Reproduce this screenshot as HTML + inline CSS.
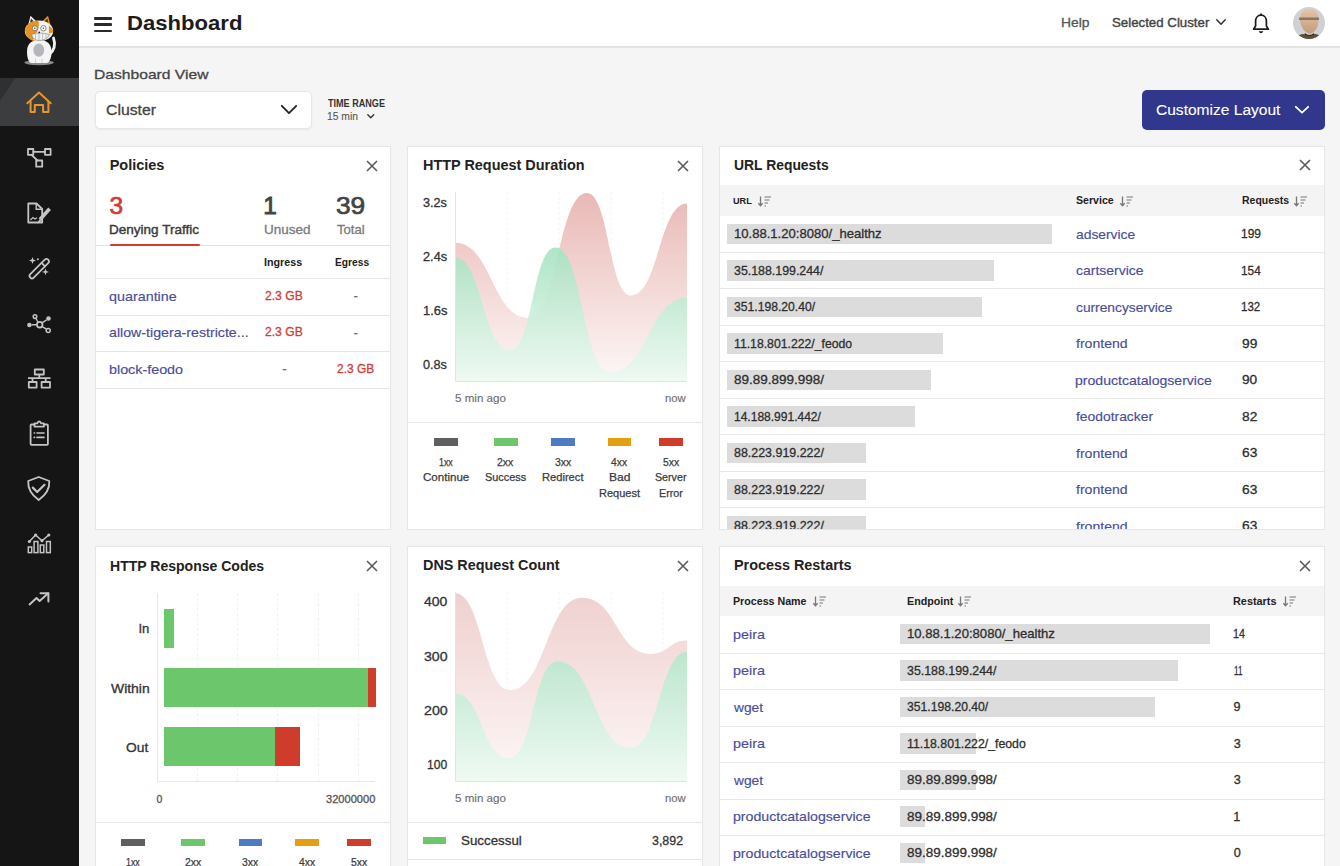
<!DOCTYPE html>
<html><head><meta charset="utf-8"><style>
html,body{margin:0;padding:0;width:1340px;height:866px;overflow:hidden;background:#f5f5f5;font-family:"Liberation Sans",sans-serif;}
.t{position:absolute;white-space:nowrap;transform-origin:0 0;}
svg{overflow:visible}
</style></head><body>
<div style="position:absolute;left:0.00px;top:0.00px;width:79.00px;height:866.00px;background:#151516;"></div>
<div style="position:absolute;left:0.00px;top:78.00px;width:79.00px;height:47.50px;background:#3c3d3f;"></div>
<svg style="position:absolute;left:0.00px;top:78.00px;" width="16" height="23" viewBox="0 0 16 23"><path d="M0 0H15.5Q8 11 0 23Z" fill="#2f3032"/></svg>
<svg style="position:absolute;left:0.00px;top:0.00px;" width="79" height="78" viewBox="0 0 79 78"><ellipse cx="39.1" cy="62.6" rx="14.7" ry="2.6" fill="#8a8a8a"/><path d="M49 55 Q57 48 53.5 38" stroke="#f2f2f2" stroke-width="2.8" fill="none" stroke-linecap="round"/><path d="M27 52 Q27 40 39 40 Q51.5 40 51.5 52 Q51.5 61 47 63 H31 Q27 61 27 52 Z" fill="#f4f4f4"/><ellipse cx="38.8" cy="50.1" rx="5.4" ry="6.6" fill="#b5b6ba"/><path d="M35.5 63 V58.5 M42 63 V58.5" stroke="#c8c8c8" stroke-width="0.8"/><path d="M28.2 25 L30.5 15.8 L37 22 Z" fill="#f2f2f2"/><path d="M30 23 L31 18.5 L34 21.5 Z" fill="#333"/><path d="M41.5 22 L48 15.7 L50.5 25 Z" fill="#e8921f"/><path d="M43.5 22 L47.5 18.5 L48.5 23 Z" fill="#5a3a10"/><ellipse cx="39" cy="31" rx="14.2" ry="10.4" fill="#f2f2f2"/><path d="M38.5 20.6 Q27 21 25 30 Q25.5 38 33 41 L35 34 Q40 30 38.5 20.6 Z" fill="#e8921f"/><path d="M48.8 25.5 Q53.5 28 53 32.5 L49 33.6 Z" fill="#e8921f"/><circle cx="34.8" cy="28.3" r="2.5" fill="#fff" stroke="#666" stroke-width="0.8"/><circle cx="43.4" cy="28.3" r="2.7" fill="#fff" stroke="#666" stroke-width="0.8"/><circle cx="34.8" cy="28.3" r="0.8" fill="#444"/><circle cx="43.4" cy="28.3" r="0.8" fill="#444"/><path d="M31.5 34.5 Q39 31.5 49.5 34.5 Q47 40.5 39 40.5 Q33 40.5 31.5 34.5 Z" fill="#f0f0f0" stroke="#777" stroke-width="0.6"/><path d="M35.5 34 V39.5 M39 33.3 V40 M42.5 33.6 V39.8 M46 34.2 V38.6" stroke="#999" stroke-width="0.5"/><circle cx="39.2" cy="32.3" r="0.9" fill="#222"/></svg>
<svg style="position:absolute;left:0.00px;top:78.00px;" width="79" height="48" viewBox="0 0 79 48"><path d="M27.3 25.3 L39 14.6 L50.7 25.3" stroke="#e8962a" stroke-width="2" fill="none" stroke-linejoin="round" stroke-linecap="round"/><path d="M30.6 23 V34 H34.8 V27 H43.1 V34 H48.4 V23" stroke="#e8962a" stroke-width="2" fill="none" stroke-linejoin="round"/></svg>
<svg style="position:absolute;left:0.00px;top:140.00px;" width="79" height="32" viewBox="0 0 79 32"><rect x="28" y="9" width="5.3" height="5.8" stroke="#c4c4c4" stroke-width="1.8" fill="none" stroke-linejoin="round" stroke-linecap="round"/><rect x="45" y="9" width="5.6" height="5.8" stroke="#c4c4c4" stroke-width="1.8" fill="none" stroke-linejoin="round" stroke-linecap="round"/><rect x="36.2" y="20.5" width="6" height="6.2" stroke="#c4c4c4" stroke-width="1.8" fill="none" stroke-linejoin="round" stroke-linecap="round"/><path d="M33.3 11.9 H45 M31.5 14.8 L37.5 20.5" stroke="#c4c4c4" stroke-width="1.8" fill="none" stroke-linejoin="round" stroke-linecap="round"/></svg>
<svg style="position:absolute;left:0.00px;top:195.00px;" width="79" height="32" viewBox="0 0 79 32"><path d="M28.3 8.5 H36.5 L42.2 14 V27.5 H28.3 Z" stroke="#c4c4c4" stroke-width="1.8" fill="none" stroke-linejoin="round" stroke-linecap="round"/><path d="M36.2 8.8 V14.2 H41.8" stroke="#c4c4c4" stroke-width="1.4" fill="none"/><path d="M30.5 25 L33 22.5 L35 24 L37 22.8" stroke="#c4c4c4" stroke-width="1.2" fill="none"/><path d="M49.6 13.8 L40 24.5" stroke="#c4c4c4" stroke-width="3.6" fill="none"/><path d="M40 24.5 L38.5 27 L41 25.6" stroke="#c4c4c4" stroke-width="1.2" fill="#c4c4c4"/></svg>
<svg style="position:absolute;left:0.00px;top:250.00px;" width="79" height="32" viewBox="0 0 79 32"><path d="M30.3 24.2 L44.8 9.7 Q46.5 8 48.2 9.7 Q49.9 11.4 48.2 13.1 L33.7 27.6 Q32 29.3 30.3 27.6 Q28.6 25.9 30.3 24.2 Z" stroke="#c4c4c4" stroke-width="1.8" fill="none" stroke-linejoin="round" stroke-linecap="round"/><path d="M41.6 12.9 L45 16.3" stroke="#c4c4c4" stroke-width="1.8" fill="none" stroke-linejoin="round" stroke-linecap="round"/><path d="M32.5 7 L33.4 9.6 L36 10.5 L33.4 11.4 L32.5 14 L31.6 11.4 L29 10.5 L31.6 9.6 Z" fill="#c4c4c4"/><path d="M45.5 18.5 L46.4 21 L48.9 21.9 L46.4 22.8 L45.5 25.3 L44.6 22.8 L42.1 21.9 L44.6 21 Z" fill="#c4c4c4"/><circle cx="37.9" cy="9.2" r="1" fill="#c4c4c4"/></svg>
<svg style="position:absolute;left:0.00px;top:305.00px;" width="79" height="32" viewBox="0 0 79 32"><circle cx="39.7" cy="19.7" r="2.8" stroke="#c4c4c4" stroke-width="1.8" fill="none" stroke-linejoin="round" stroke-linecap="round"/><circle cx="35" cy="11.6" r="1.8" stroke="#c4c4c4" stroke-width="1.5" fill="none"/><circle cx="48.5" cy="13.5" r="2.3" fill="#c4c4c4"/><circle cx="29.4" cy="20" r="2.3" fill="#c4c4c4"/><circle cx="48.2" cy="25.5" r="2" stroke="#c4c4c4" stroke-width="1.5" fill="none"/><path d="M36.9 19.8 H31.7 M38 17.3 L35.9 13.2 M42 17.9 L46.6 14.8 M42 21.6 L46.6 24.2" stroke="#c4c4c4" stroke-width="1.4"/></svg>
<svg style="position:absolute;left:0.00px;top:360.00px;" width="79" height="32" viewBox="0 0 79 32"><rect x="34.8" y="9.5" width="9" height="5" stroke="#c4c4c4" stroke-width="1.8" fill="none" stroke-linejoin="round" stroke-linecap="round"/><path d="M39.3 14.5 V18.2 M28 18.2 H50.5 M32.5 18.2 V21.8 M45.7 18.2 V21.8" stroke="#c4c4c4" stroke-width="1.8"/><rect x="28.8" y="22" width="7.8" height="5.6" stroke="#c4c4c4" stroke-width="1.8" fill="none" stroke-linejoin="round" stroke-linecap="round"/><rect x="41.6" y="22" width="8.4" height="5.6" stroke="#c4c4c4" stroke-width="1.8" fill="none" stroke-linejoin="round" stroke-linecap="round"/></svg>
<svg style="position:absolute;left:0.00px;top:415.00px;" width="79" height="32" viewBox="0 0 79 32"><path d="M34.4 9.5 H31.5 Q30.6 9.5 30.6 10.4 V29 Q30.6 29.9 31.5 29.9 H47 Q47.9 29.9 47.9 29 V10.4 Q47.9 9.5 47 9.5 H44" stroke="#c4c4c4" stroke-width="1.8" fill="none" stroke-linejoin="round" stroke-linecap="round"/><path d="M34.5 8.3 H37.4 Q37.8 6.5 39.2 6.5 Q40.6 6.5 41 8.3 H43.9 V11.6 H34.5 Z" stroke="#c4c4c4" stroke-width="1.8" fill="none" stroke-linejoin="round" stroke-linecap="round"/><path d="M34.2 18 H34.6 M37 18 H44 M34.2 22.4 H34.6 M37 22.4 H44" stroke="#c4c4c4" stroke-width="1.6" stroke-linecap="round"/></svg>
<svg style="position:absolute;left:0.00px;top:470.00px;" width="79" height="32" viewBox="0 0 79 32"><path d="M38.7 7 L49.3 11 Q50 22 38.7 30 Q27.5 22 28.2 11 Z" stroke="#c4c4c4" stroke-width="1.8" fill="none" stroke-linejoin="round" stroke-linecap="round"/><path d="M32.8 17.6 L37.2 22 L44.5 14.8" stroke="#c4c4c4" stroke-width="2.2" fill="none" stroke-linecap="round" stroke-linejoin="round"/></svg>
<svg style="position:absolute;left:0.00px;top:525.00px;" width="79" height="32" viewBox="0 0 79 32"><path d="M29.4 16.5 L35.6 10 L42 15.7 L48.8 10" stroke="#c4c4c4" stroke-width="1.5" fill="none"/><circle cx="29.4" cy="16.5" r="1.6" fill="#c4c4c4"/><circle cx="35.6" cy="10" r="1.6" fill="#c4c4c4"/><circle cx="42" cy="15.7" r="1.6" fill="#c4c4c4"/><circle cx="48.8" cy="10" r="1.6" fill="#c4c4c4"/><rect x="28.3" y="22" width="3.4" height="5.6" stroke="#c4c4c4" stroke-width="1.5" fill="none"/><rect x="34.1" y="16.5" width="3.8" height="11.1" stroke="#c4c4c4" stroke-width="1.5" fill="none"/><rect x="40.3" y="20" width="3.5" height="7.6" stroke="#c4c4c4" stroke-width="1.5" fill="none"/><rect x="46.5" y="16.5" width="3.8" height="11.1" stroke="#c4c4c4" stroke-width="1.5" fill="none"/></svg>
<svg style="position:absolute;left:0.00px;top:580.00px;" width="79" height="32" viewBox="0 0 79 32"><path d="M29.6 24.4 L36.5 18 L39.6 21 L48.2 13.2" stroke="#c4c4c4" stroke-width="2" fill="none" stroke-linejoin="round" stroke-linecap="round"/><path d="M40.5 13.2 H48.4 V21.5" stroke="#c4c4c4" stroke-width="2" fill="none" stroke-linejoin="round" stroke-linecap="round"/></svg>
<div style="position:absolute;left:79.00px;top:0.00px;width:1261.00px;height:46.00px;background:#fff;"></div>
<div style="position:absolute;left:79.00px;top:46.00px;width:1261.00px;height:2.00px;background:#e2e2e2;"></div>
<div style="position:absolute;left:94.00px;top:17.00px;width:18.00px;height:2.50px;background:#2a2a2a;border-radius:1px;"></div>
<div style="position:absolute;left:94.00px;top:23.30px;width:18.00px;height:2.50px;background:#2a2a2a;border-radius:1px;"></div>
<div style="position:absolute;left:94.00px;top:29.50px;width:18.00px;height:2.50px;background:#2a2a2a;border-radius:1px;"></div>
<div class="t" style="left:126.52px;top:12.65px;font-size:20.50px;line-height:20.50px;font-weight:700;color:#1c1c1c;transform:scaleX(1.0781);">Dashboard</div>
<div class="t" style="left:1060.86px;top:15.97px;font-size:13.50px;line-height:13.50px;color:#555;-webkit-text-stroke:0.30px #555;transform:scaleX(1.0272);">Help</div>
<div class="t" style="left:1112.40px;top:15.97px;font-size:13.50px;line-height:13.50px;color:#444;-webkit-text-stroke:0.40px #444;transform:scaleX(0.9826);">Selected Cluster</div>
<svg style="position:absolute;left:1215.50px;top:19.00px;" width="10" height="6" viewBox="0 0 10 6"><path d="M0.8 0.8L5.00 5.20L9.20 0.8" stroke="#333" stroke-width="1.5" fill="none" stroke-linecap="round" stroke-linejoin="round"/></svg>
<svg style="position:absolute;left:1251.00px;top:13.00px;" width="20" height="21" viewBox="0 0 20 21"><path d="M10 2.2C6.6 2.2 4.6 4.9 4.6 8.2V13L2.6 16.2H17.4L15.4 13V8.2C15.4 4.9 13.4 2.2 10 2.2Z" stroke="#1a1a1a" stroke-width="1.7" fill="none" stroke-linejoin="round"/><path d="M7.6 18.3Q10 22 12.4 18.3Z" fill="#1a1a1a"/><path d="M10 0.6V2.2" stroke="#1a1a1a" stroke-width="1.7"/></svg>
<svg style="position:absolute;left:1293.00px;top:7.00px;" width="32" height="32" viewBox="0 0 32 32"><defs><clipPath id="av"><circle cx="16" cy="16" r="16"/></clipPath><linearGradient id="avf" x1="0" y1="0" x2="0" y2="1"><stop offset="0" stop-color="#e4c4a8"/><stop offset="1" stop-color="#c49a7c"/></linearGradient></defs><g clip-path="url(#av)"><rect width="32" height="32" fill="#cfd1d4"/><path d="M7 14 Q7 2 16.5 2 Q26 2 25.5 14 Q25 24 17 27 Q9 25 7 14Z" fill="url(#avf)"/><path d="M6 10.5 H26 V13 H6Z" fill="#6a5a48" opacity="0.7"/><path d="M12 26 Q16 30 21 26 L22 29 Q16 33 11 29Z" fill="#3a2e20"/><path d="M2 34 Q4 27 11 27 Q16 31 22 27 Q29 28 30 34Z" fill="#5a5038"/></g></svg>
<div class="t" style="left:93.52px;top:68.07px;font-size:13.50px;line-height:13.50px;color:#454545;-webkit-text-stroke:0.30px #454545;transform:scaleX(1.1584);">Dashboard View</div>
<div style="position:absolute;left:95.00px;top:91.00px;width:216.50px;height:38.00px;background:#fff;border:1px solid #e6e6e6;border-radius:5px;box-sizing:border-box;box-shadow:0 1px 2px rgba(0,0,0,0.06);"></div>
<div class="t" style="left:105.70px;top:103.16px;font-size:14.70px;line-height:14.70px;color:#444;-webkit-text-stroke:0.30px #444;transform:scaleX(1.0752);">Cluster</div>
<svg style="position:absolute;left:281.00px;top:105.00px;" width="16" height="9" viewBox="0 0 16 9"><path d="M0.8 0.8L8.00 8.20L15.20 0.8" stroke="#222" stroke-width="1.8" fill="none" stroke-linecap="round" stroke-linejoin="round"/></svg>
<div class="t" style="left:328.10px;top:98.73px;font-size:10.00px;line-height:10.00px;font-weight:700;color:#333;transform:scaleX(0.9073);">TIME RANGE</div>
<div class="t" style="left:327.41px;top:110.69px;font-size:11.00px;line-height:11.00px;color:#555;-webkit-text-stroke:0.10px #555;transform:scaleX(0.9376);">15 min</div>
<svg style="position:absolute;left:367.00px;top:114.00px;" width="7.5" height="4.5" viewBox="0 0 7.5 4.5"><path d="M0.8 0.8L3.75 3.70L6.70 0.8" stroke="#333" stroke-width="1.4" fill="none" stroke-linecap="round" stroke-linejoin="round"/></svg>
<div style="position:absolute;left:1141.50px;top:90.00px;width:183.50px;height:39.50px;background:#30378d;border-radius:5px;"></div>
<div class="t" style="left:1156.21px;top:102.38px;font-size:15.50px;line-height:15.50px;color:#fff;-webkit-text-stroke:0.10px #fff;transform:scaleX(1.0028);">Customize Layout</div>
<svg style="position:absolute;left:1294.50px;top:106.00px;" width="14" height="7.5" viewBox="0 0 14 7.5"><path d="M0.8 0.8L7.00 6.70L13.20 0.8" stroke="#fff" stroke-width="1.8" fill="none" stroke-linecap="round" stroke-linejoin="round"/></svg>
<div style="position:absolute;left:95.00px;top:146.00px;width:296.00px;height:384.00px;background:#fff;border:1px solid #e6e6e6;box-sizing:border-box;"></div>
<div style="position:absolute;left:407.00px;top:146.00px;width:296.00px;height:384.00px;background:#fff;border:1px solid #e6e6e6;box-sizing:border-box;"></div>
<div style="position:absolute;left:719.00px;top:146.00px;width:606.00px;height:384.00px;background:#fff;border:1px solid #e6e6e6;box-sizing:border-box;"></div>
<div style="position:absolute;left:95.00px;top:546.00px;width:296.00px;height:354.00px;background:#fff;border:1px solid #e6e6e6;box-sizing:border-box;"></div>
<div style="position:absolute;left:407.00px;top:546.00px;width:296.00px;height:354.00px;background:#fff;border:1px solid #e6e6e6;box-sizing:border-box;"></div>
<div style="position:absolute;left:719.00px;top:546.00px;width:606.00px;height:354.00px;background:#fff;border:1px solid #e6e6e6;box-sizing:border-box;"></div>
<div class="t" style="left:109.63px;top:158.23px;font-size:14.50px;line-height:14.50px;font-weight:700;color:#222;">Policies</div>
<svg style="position:absolute;left:365.50px;top:159.50px;" width="12" height="12" viewBox="0 0 12 12"><path d="M1 1L11 11M11 1L1 11" stroke="#5a5a5a" stroke-width="1.6" fill="none"/></svg>
<div class="t" style="left:109.47px;top:193.56px;font-size:24.50px;line-height:24.50px;color:#d23b35;-webkit-text-stroke:0.70px #d23b35;">3</div>
<div class="t" style="left:108.89px;top:223.20px;font-size:13.00px;line-height:13.00px;color:#3a3a3a;-webkit-text-stroke:0.40px #3a3a3a;transform:scaleX(1.0406);">Denying Traffic</div>
<div class="t" style="left:263.13px;top:193.56px;font-size:24.50px;line-height:24.50px;color:#444;-webkit-text-stroke:0.90px #444;">1</div>
<div class="t" style="left:263.96px;top:223.20px;font-size:13.00px;line-height:13.00px;color:#7a7a7a;-webkit-text-stroke:0.30px #7a7a7a;transform:scaleX(1.0357);">Unused</div>
<div class="t" style="left:336.00px;top:193.56px;font-size:24.50px;line-height:24.50px;color:#444;-webkit-text-stroke:0.70px #444;transform:scaleX(1.0732);">39</div>
<div class="t" style="left:336.71px;top:223.20px;font-size:13.00px;line-height:13.00px;color:#7a7a7a;-webkit-text-stroke:0.30px #7a7a7a;transform:scaleX(1.0094);">Total</div>
<div style="position:absolute;left:96.00px;top:245.00px;width:294.00px;height:1.00px;background:#e3e3e3;"></div>
<div style="position:absolute;left:110.00px;top:243.70px;width:90.00px;height:2.30px;background:#d23b35;border-radius:1px;"></div>
<div class="t" style="left:264.28px;top:257.11px;font-size:10.50px;line-height:10.50px;font-weight:700;color:#222;transform:scaleX(1.0216);">Ingress</div>
<div class="t" style="left:335.32px;top:257.11px;font-size:10.50px;line-height:10.50px;font-weight:700;color:#222;transform:scaleX(0.9738);">Egress</div>
<div style="position:absolute;left:96.00px;top:278.00px;width:294.00px;height:1.00px;background:#e6e6e6;"></div>
<div style="position:absolute;left:96.00px;top:314.50px;width:294.00px;height:1.00px;background:#e6e6e6;"></div>
<div style="position:absolute;left:96.00px;top:351.00px;width:294.00px;height:1.00px;background:#e6e6e6;"></div>
<div style="position:absolute;left:96.00px;top:387.50px;width:294.00px;height:1.00px;background:#e6e6e6;"></div>
<div class="t" style="left:109.40px;top:289.50px;font-size:13.00px;line-height:13.00px;color:#4a4d9c;-webkit-text-stroke:0.15px #4a4d9c;transform:scaleX(1.1025);">quarantine</div>
<div class="t" style="left:265.39px;top:289.92px;font-size:12.50px;line-height:12.50px;color:#d23b35;-webkit-text-stroke:0.30px #d23b35;transform:scaleX(0.9702);">2.3 GB</div>
<div class="t" style="left:353.80px;top:290.34px;font-size:12.00px;line-height:12.00px;color:#666;-webkit-text-stroke:0.30px #666;">-</div>
<div class="t" style="left:109.40px;top:326.00px;font-size:13.00px;line-height:13.00px;color:#4a4d9c;-webkit-text-stroke:0.15px #4a4d9c;transform:scaleX(1.0917);">allow-tigera-restricte...</div>
<div class="t" style="left:265.39px;top:326.42px;font-size:12.50px;line-height:12.50px;color:#d23b35;-webkit-text-stroke:0.30px #d23b35;transform:scaleX(0.9702);">2.3 GB</div>
<div class="t" style="left:353.80px;top:326.84px;font-size:12.00px;line-height:12.00px;color:#666;-webkit-text-stroke:0.30px #666;">-</div>
<div class="t" style="left:109.08px;top:362.50px;font-size:13.00px;line-height:13.00px;color:#4a4d9c;-webkit-text-stroke:0.15px #4a4d9c;transform:scaleX(1.1014);">block-feodo</div>
<div class="t" style="left:282.60px;top:363.34px;font-size:12.00px;line-height:12.00px;color:#666;-webkit-text-stroke:0.30px #666;">-</div>
<div class="t" style="left:337.10px;top:362.92px;font-size:12.50px;line-height:12.50px;color:#d23b35;-webkit-text-stroke:0.30px #d23b35;transform:scaleX(0.9569);">2.3 GB</div>
<div class="t" style="left:422.54px;top:158.23px;font-size:14.50px;line-height:14.50px;font-weight:700;color:#222;transform:scaleX(0.9947);">HTTP Request Duration</div>
<svg style="position:absolute;left:677.00px;top:159.50px;" width="12" height="12" viewBox="0 0 12 12"><path d="M1 1L11 11M11 1L1 11" stroke="#5a5a5a" stroke-width="1.6" fill="none"/></svg>
<div class="t" style="left:423.02px;top:196.84px;font-size:12.00px;line-height:12.00px;color:#333;-webkit-text-stroke:0.30px #333;transform:scaleX(1.0555);">3.2s</div>
<div class="t" style="left:422.86px;top:250.84px;font-size:12.00px;line-height:12.00px;color:#333;-webkit-text-stroke:0.30px #333;transform:scaleX(1.0626);">2.4s</div>
<div class="t" style="left:422.51px;top:304.94px;font-size:12.00px;line-height:12.00px;color:#333;-webkit-text-stroke:0.30px #333;transform:scaleX(1.0781);">1.6s</div>
<div class="t" style="left:423.00px;top:358.94px;font-size:12.00px;line-height:12.00px;color:#333;-webkit-text-stroke:0.30px #333;transform:scaleX(1.0560);">0.8s</div>
<svg style="position:absolute;left:455.00px;top:192.00px;" width="232" height="190" viewBox="0 0 232 190"><defs><linearGradient id="gr192" x1="0" y1="0" x2="0" y2="1"><stop offset="0" stop-color="#e9b9b6"/><stop offset="1" stop-color="#fdf8f7"/></linearGradient><linearGradient id="gg192" x1="0" y1="0" x2="0" y2="1"><stop offset="0" stop-color="#a6e2c1" stop-opacity="0.9"/><stop offset="1" stop-color="#eefaf3" stop-opacity="0.9"/></linearGradient></defs><path d="M52.0 0V190.0" stroke="#f3f3f3" stroke-width="1" stroke-dasharray="3 2"/><path d="M104.0 0V190.0" stroke="#f3f3f3" stroke-width="1" stroke-dasharray="3 2"/><path d="M156.0 0V190.0" stroke="#f3f3f3" stroke-width="1" stroke-dasharray="3 2"/><path d="M208.0 0V190.0" stroke="#f3f3f3" stroke-width="1" stroke-dasharray="3 2"/><path d="M0.0 50.8 C36.8 50.8 36.8 126.0 73.6 126.0 C102.8 126.0 102.8 1.1 132.0 1.1 C153.9 1.1 153.9 103.4 175.8 103.4 C203.9 103.4 203.9 11.5 232.0 11.5 L232.0 190.0 L0.0 190.0 Z" fill="url(#gr192)"/><path d="M0.0 65.8 C27.5 65.8 27.5 158.2 55.0 158.2 C77.7 158.2 77.7 55.4 100.4 55.4 C127.7 55.4 127.7 180.2 155.0 180.2 C193.5 180.2 193.5 105.8 232.0 105.8 L232.0 190.0 L0.0 190.0 Z" fill="url(#gg192)"/><path d="M0.5 0V189.5H232.0" stroke="#e4e4e4" stroke-width="1" fill="none"/></svg>
<div class="t" style="left:455.04px;top:392.69px;font-size:11.00px;line-height:11.00px;color:#707070;-webkit-text-stroke:0.15px #707070;transform:scaleX(1.0547);">5 min ago</div>
<div class="t" style="left:665.25px;top:392.69px;font-size:11.00px;line-height:11.00px;color:#707070;-webkit-text-stroke:0.15px #707070;transform:scaleX(1.0269);">now</div>
<div style="position:absolute;left:408.00px;top:421.50px;width:294.00px;height:1.00px;background:#e6e6e6;"></div>
<div style="position:absolute;left:434.00px;top:438.30px;width:24.00px;height:7.70px;background:#5f5f5f;"></div>
<div class="t" style="left:438.83px;top:456.63px;font-size:11.30px;line-height:11.30px;color:#3a3a3a;-webkit-text-stroke:0.25px #3a3a3a;transform:scaleX(0.7830);">1xx</div>
<div class="t" style="left:422.81px;top:472.43px;font-size:11.30px;line-height:11.30px;color:#3a3a3a;-webkit-text-stroke:0.25px #3a3a3a;transform:scaleX(1.0236);">Continue</div>
<div style="position:absolute;left:493.75px;top:438.30px;width:23.85px;height:7.70px;background:#6cc66c;"></div>
<div class="t" style="left:497.30px;top:456.63px;font-size:11.30px;line-height:11.30px;color:#3a3a3a;-webkit-text-stroke:0.25px #3a3a3a;transform:scaleX(0.9293);">2xx</div>
<div class="t" style="left:485.03px;top:472.43px;font-size:11.30px;line-height:11.30px;color:#3a3a3a;-webkit-text-stroke:0.25px #3a3a3a;transform:scaleX(0.9645);">Success</div>
<div style="position:absolute;left:551.00px;top:438.30px;width:23.80px;height:7.70px;background:#4f7bc4;"></div>
<div class="t" style="left:554.65px;top:456.63px;font-size:11.30px;line-height:11.30px;color:#3a3a3a;-webkit-text-stroke:0.25px #3a3a3a;transform:scaleX(0.9218);">3xx</div>
<div class="t" style="left:541.74px;top:472.43px;font-size:11.30px;line-height:11.30px;color:#3a3a3a;-webkit-text-stroke:0.25px #3a3a3a;transform:scaleX(0.9862);">Redirect</div>
<div style="position:absolute;left:607.60px;top:438.30px;width:23.90px;height:7.70px;background:#e4a010;"></div>
<div class="t" style="left:611.46px;top:456.63px;font-size:11.30px;line-height:11.30px;color:#3a3a3a;-webkit-text-stroke:0.25px #3a3a3a;transform:scaleX(0.9126);">4xx</div>
<div class="t" style="left:608.71px;top:472.43px;font-size:11.30px;line-height:11.30px;color:#3a3a3a;-webkit-text-stroke:0.25px #3a3a3a;transform:scaleX(1.0677);">Bad</div>
<div class="t" style="left:598.65px;top:488.23px;font-size:11.30px;line-height:11.30px;color:#3a3a3a;-webkit-text-stroke:0.25px #3a3a3a;transform:scaleX(0.9737);">Request</div>
<div style="position:absolute;left:659.30px;top:438.30px;width:23.70px;height:7.70px;background:#d03c2c;"></div>
<div class="t" style="left:662.88px;top:456.63px;font-size:11.30px;line-height:11.30px;color:#3a3a3a;-webkit-text-stroke:0.25px #3a3a3a;transform:scaleX(0.9229);">5xx</div>
<div class="t" style="left:655.26px;top:472.43px;font-size:11.30px;line-height:11.30px;color:#3a3a3a;-webkit-text-stroke:0.25px #3a3a3a;transform:scaleX(0.9453);">Server</div>
<div class="t" style="left:658.92px;top:488.23px;font-size:11.30px;line-height:11.30px;color:#3a3a3a;-webkit-text-stroke:0.25px #3a3a3a;transform:scaleX(0.9460);">Error</div>
<div class="t" style="left:733.77px;top:158.23px;font-size:14.50px;line-height:14.50px;font-weight:700;color:#222;transform:scaleX(0.9577);">URL Requests</div>
<svg style="position:absolute;left:1299.00px;top:159.00px;" width="12" height="12" viewBox="0 0 12 12"><path d="M1 1L11 11M11 1L1 11" stroke="#5a5a5a" stroke-width="1.6" fill="none"/></svg>
<div style="position:absolute;left:720.00px;top:185.00px;width:604.00px;height:31.00px;background:#f4f4f4;"></div>
<div class="t" style="left:733.45px;top:196.46px;font-size:9.50px;line-height:9.50px;font-weight:700;color:#222;transform:scaleX(0.9646);">URL</div>
<svg style="position:absolute;left:758.00px;top:195.50px;" width="14" height="11" viewBox="0 0 14 11"><path d="M2.5 0.5V9.5M0.3 7.3L2.5 9.7L4.7 7.3" stroke="#777" stroke-width="1.3" fill="none"/><path d="M6.5 1H13M6.5 4H11.5M6.5 7H10M6.5 10H8" stroke="#777" stroke-width="1.2" fill="none"/></svg>
<div class="t" style="left:1076.00px;top:196.03px;font-size:10.00px;line-height:10.00px;font-weight:700;color:#222;transform:scaleX(1.0585);">Service</div>
<svg style="position:absolute;left:1120.00px;top:195.50px;" width="14" height="11" viewBox="0 0 14 11"><path d="M2.5 0.5V9.5M0.3 7.3L2.5 9.7L4.7 7.3" stroke="#777" stroke-width="1.3" fill="none"/><path d="M6.5 1H13M6.5 4H11.5M6.5 7H10M6.5 10H8" stroke="#777" stroke-width="1.2" fill="none"/></svg>
<div class="t" style="left:1241.50px;top:196.03px;font-size:10.00px;line-height:10.00px;font-weight:700;color:#222;transform:scaleX(1.0470);">Requests</div>
<svg style="position:absolute;left:1294.30px;top:195.50px;" width="14" height="11" viewBox="0 0 14 11"><path d="M2.5 0.5V9.5M0.3 7.3L2.5 9.7L4.7 7.3" stroke="#777" stroke-width="1.3" fill="none"/><path d="M6.5 1H13M6.5 4H11.5M6.5 7H10M6.5 10H8" stroke="#777" stroke-width="1.2" fill="none"/></svg>
<div style="position:absolute;left:720px;top:216px;width:604px;height:313px;overflow:hidden;">
<div style="position:absolute;left:-720px;top:-216px;width:1340px;height:866px;">
<div style="position:absolute;left:726.50px;top:223.70px;width:325.90px;height:20.70px;background:#dcdcdc;"></div>
<div class="t" style="left:733.50px;top:228.13px;font-size:12.60px;line-height:12.60px;color:#2e2e2e;-webkit-text-stroke:0.30px #2e2e2e;transform:scaleX(1.0381);">10.88.1.20:8080/_healthz</div>
<div class="t" style="left:1075.71px;top:227.80px;font-size:13.00px;line-height:13.00px;color:#4a4d9c;-webkit-text-stroke:0.15px #4a4d9c;transform:scaleX(1.0641);">adservice</div>
<div class="t" style="left:1241.29px;top:228.13px;font-size:12.60px;line-height:12.60px;color:#2e2e2e;-webkit-text-stroke:0.30px #2e2e2e;transform:scaleX(0.9504);">199</div>
<div style="position:absolute;left:720.00px;top:251.50px;width:604.00px;height:1.00px;background:#e8e8e8;"></div>
<div style="position:absolute;left:726.50px;top:260.20px;width:267.90px;height:20.70px;background:#dcdcdc;"></div>
<div class="t" style="left:734.03px;top:264.63px;font-size:12.60px;line-height:12.60px;color:#2e2e2e;-webkit-text-stroke:0.30px #2e2e2e;transform:scaleX(0.9823);">35.188.199.244/</div>
<div class="t" style="left:1075.71px;top:264.30px;font-size:13.00px;line-height:13.00px;color:#4a4d9c;-webkit-text-stroke:0.15px #4a4d9c;transform:scaleX(1.0742);">cartservice</div>
<div class="t" style="left:1241.30px;top:264.63px;font-size:12.60px;line-height:12.60px;color:#2e2e2e;-webkit-text-stroke:0.30px #2e2e2e;transform:scaleX(0.9394);">154</div>
<div style="position:absolute;left:720.00px;top:288.00px;width:604.00px;height:1.00px;background:#e8e8e8;"></div>
<div style="position:absolute;left:726.50px;top:296.70px;width:255.10px;height:20.70px;background:#dcdcdc;"></div>
<div class="t" style="left:734.04px;top:301.13px;font-size:12.60px;line-height:12.60px;color:#2e2e2e;-webkit-text-stroke:0.30px #2e2e2e;transform:scaleX(0.9641);">351.198.20.40/</div>
<div class="t" style="left:1075.72px;top:300.80px;font-size:13.00px;line-height:13.00px;color:#4a4d9c;-webkit-text-stroke:0.15px #4a4d9c;transform:scaleX(1.0590);">currencyservice</div>
<div class="t" style="left:1241.32px;top:301.13px;font-size:12.60px;line-height:12.60px;color:#2e2e2e;-webkit-text-stroke:0.30px #2e2e2e;transform:scaleX(0.9162);">132</div>
<div style="position:absolute;left:720.00px;top:324.50px;width:604.00px;height:1.00px;background:#e8e8e8;"></div>
<div style="position:absolute;left:726.50px;top:333.20px;width:216.50px;height:20.70px;background:#dcdcdc;"></div>
<div class="t" style="left:733.57px;top:337.63px;font-size:12.60px;line-height:12.60px;color:#2e2e2e;-webkit-text-stroke:0.30px #2e2e2e;transform:scaleX(0.9717);">11.18.801.222/_feodo</div>
<div class="t" style="left:1076.10px;top:337.30px;font-size:13.00px;line-height:13.00px;color:#4a4d9c;-webkit-text-stroke:0.15px #4a4d9c;transform:scaleX(1.0818);">frontend</div>
<div class="t" style="left:1241.56px;top:337.63px;font-size:12.60px;line-height:12.60px;color:#2e2e2e;-webkit-text-stroke:0.30px #2e2e2e;transform:scaleX(1.0914);">99</div>
<div style="position:absolute;left:720.00px;top:361.00px;width:604.00px;height:1.00px;background:#e8e8e8;"></div>
<div style="position:absolute;left:726.50px;top:369.70px;width:204.50px;height:20.70px;background:#dcdcdc;"></div>
<div class="t" style="left:733.91px;top:374.13px;font-size:12.60px;line-height:12.60px;color:#2e2e2e;-webkit-text-stroke:0.30px #2e2e2e;transform:scaleX(1.0703);">89.89.899.998/</div>
<div class="t" style="left:1075.39px;top:373.80px;font-size:13.00px;line-height:13.00px;color:#4a4d9c;-webkit-text-stroke:0.15px #4a4d9c;transform:scaleX(1.0820);">productcatalogservice</div>
<div class="t" style="left:1241.56px;top:374.13px;font-size:12.60px;line-height:12.60px;color:#2e2e2e;-webkit-text-stroke:0.30px #2e2e2e;transform:scaleX(1.0826);">90</div>
<div style="position:absolute;left:720.00px;top:397.50px;width:604.00px;height:1.00px;background:#e8e8e8;"></div>
<div style="position:absolute;left:726.50px;top:406.20px;width:188.00px;height:20.70px;background:#dcdcdc;"></div>
<div class="t" style="left:733.58px;top:410.63px;font-size:12.60px;line-height:12.60px;color:#2e2e2e;-webkit-text-stroke:0.30px #2e2e2e;transform:scaleX(0.9542);">14.188.991.442/</div>
<div class="t" style="left:1076.10px;top:410.30px;font-size:13.00px;line-height:13.00px;color:#4a4d9c;-webkit-text-stroke:0.15px #4a4d9c;transform:scaleX(1.0659);">feodotracker</div>
<div class="t" style="left:1241.60px;top:410.63px;font-size:12.60px;line-height:12.60px;color:#2e2e2e;-webkit-text-stroke:0.30px #2e2e2e;transform:scaleX(1.0909);">82</div>
<div style="position:absolute;left:720.00px;top:434.00px;width:604.00px;height:1.00px;background:#e8e8e8;"></div>
<div style="position:absolute;left:726.50px;top:442.70px;width:139.50px;height:20.70px;background:#dcdcdc;"></div>
<div class="t" style="left:733.96px;top:447.13px;font-size:12.60px;line-height:12.60px;color:#2e2e2e;-webkit-text-stroke:0.30px #2e2e2e;transform:scaleX(0.9874);">88.223.919.222/</div>
<div class="t" style="left:1076.10px;top:446.80px;font-size:13.00px;line-height:13.00px;color:#4a4d9c;-webkit-text-stroke:0.15px #4a4d9c;transform:scaleX(1.0818);">frontend</div>
<div class="t" style="left:1241.50px;top:447.13px;font-size:12.60px;line-height:12.60px;color:#2e2e2e;-webkit-text-stroke:0.30px #2e2e2e;transform:scaleX(1.0919);">63</div>
<div style="position:absolute;left:720.00px;top:470.50px;width:604.00px;height:1.00px;background:#e8e8e8;"></div>
<div style="position:absolute;left:726.50px;top:479.20px;width:139.50px;height:20.70px;background:#dcdcdc;"></div>
<div class="t" style="left:733.96px;top:483.63px;font-size:12.60px;line-height:12.60px;color:#2e2e2e;-webkit-text-stroke:0.30px #2e2e2e;transform:scaleX(0.9874);">88.223.919.222/</div>
<div class="t" style="left:1076.10px;top:483.30px;font-size:13.00px;line-height:13.00px;color:#4a4d9c;-webkit-text-stroke:0.15px #4a4d9c;transform:scaleX(1.0818);">frontend</div>
<div class="t" style="left:1241.50px;top:483.63px;font-size:12.60px;line-height:12.60px;color:#2e2e2e;-webkit-text-stroke:0.30px #2e2e2e;transform:scaleX(1.0919);">63</div>
<div style="position:absolute;left:720.00px;top:507.00px;width:604.00px;height:1.00px;background:#e8e8e8;"></div>
<div style="position:absolute;left:726.50px;top:515.70px;width:139.50px;height:20.70px;background:#dcdcdc;"></div>
<div class="t" style="left:733.96px;top:520.13px;font-size:12.60px;line-height:12.60px;color:#2e2e2e;-webkit-text-stroke:0.30px #2e2e2e;transform:scaleX(0.9874);">88.223.919.222/</div>
<div class="t" style="left:1076.10px;top:519.80px;font-size:13.00px;line-height:13.00px;color:#4a4d9c;-webkit-text-stroke:0.15px #4a4d9c;transform:scaleX(1.0818);">frontend</div>
<div class="t" style="left:1241.50px;top:520.13px;font-size:12.60px;line-height:12.60px;color:#2e2e2e;-webkit-text-stroke:0.30px #2e2e2e;transform:scaleX(1.0919);">63</div>
<div style="position:absolute;left:720.00px;top:543.50px;width:604.00px;height:1.00px;background:#e8e8e8;"></div>
</div></div>
<div class="t" style="left:110.26px;top:558.53px;font-size:14.50px;line-height:14.50px;font-weight:700;color:#222;transform:scaleX(0.9673);">HTTP Response Codes</div>
<svg style="position:absolute;left:365.50px;top:559.50px;" width="12" height="12" viewBox="0 0 12 12"><path d="M1 1L11 11M11 1L1 11" stroke="#5a5a5a" stroke-width="1.6" fill="none"/></svg>
<div style="position:absolute;left:196.60px;top:592.70px;width:1.00px;height:188.30px;background:repeating-linear-gradient(#f2f2f2 0 3px, transparent 3px 5px);"></div>
<div style="position:absolute;left:236.90px;top:592.70px;width:1.00px;height:188.30px;background:repeating-linear-gradient(#f2f2f2 0 3px, transparent 3px 5px);"></div>
<div style="position:absolute;left:277.20px;top:592.70px;width:1.00px;height:188.30px;background:repeating-linear-gradient(#f2f2f2 0 3px, transparent 3px 5px);"></div>
<div style="position:absolute;left:317.90px;top:592.70px;width:1.00px;height:188.30px;background:repeating-linear-gradient(#f2f2f2 0 3px, transparent 3px 5px);"></div>
<div style="position:absolute;left:358.20px;top:592.70px;width:1.00px;height:188.30px;background:repeating-linear-gradient(#f2f2f2 0 3px, transparent 3px 5px);"></div>
<div style="position:absolute;left:156.50px;top:592.70px;width:1.00px;height:188.80px;background:#e6e6e6;"></div>
<div style="position:absolute;left:156.50px;top:780.50px;width:218.50px;height:1.00px;background:#e6e6e6;"></div>
<div style="position:absolute;left:164.20px;top:608.50px;width:9.40px;height:39.60px;background:#6cc66c;"></div>
<div style="position:absolute;left:164.20px;top:668.00px;width:203.80px;height:39.00px;background:#6cc66c;"></div>
<div style="position:absolute;left:368.00px;top:668.00px;width:7.50px;height:39.00px;background:#d03c2c;"></div>
<div style="position:absolute;left:164.20px;top:727.20px;width:110.40px;height:38.80px;background:#6cc66c;"></div>
<div style="position:absolute;left:274.60px;top:727.20px;width:25.60px;height:38.80px;background:#d03c2c;"></div>
<div class="t" style="left:138.40px;top:622.00px;font-size:13.00px;line-height:13.00px;color:#333;-webkit-text-stroke:0.30px #333;">In</div>
<div class="t" style="left:110.64px;top:682.30px;font-size:13.00px;line-height:13.00px;color:#333;-webkit-text-stroke:0.30px #333;transform:scaleX(1.0705);">Within</div>
<div class="t" style="left:126.25px;top:740.50px;font-size:13.00px;line-height:13.00px;color:#333;-webkit-text-stroke:0.30px #333;transform:scaleX(1.0621);">Out</div>
<div class="t" style="left:156.59px;top:793.61px;font-size:10.50px;line-height:10.50px;color:#555;-webkit-text-stroke:0.30px #555;">0</div>
<div class="t" style="left:326.08px;top:793.61px;font-size:10.50px;line-height:10.50px;color:#555;-webkit-text-stroke:0.30px #555;transform:scaleX(1.0565);">32000000</div>
<div style="position:absolute;left:96.00px;top:821.50px;width:294.00px;height:1.00px;background:#e6e6e6;"></div>
<div style="position:absolute;left:121.30px;top:838.70px;width:24.10px;height:7.30px;background:#5f5f5f;"></div>
<div class="t" style="left:126.18px;top:856.93px;font-size:11.30px;line-height:11.30px;color:#3a3a3a;-webkit-text-stroke:0.25px #3a3a3a;transform:scaleX(0.7830);">1xx</div>
<div class="t" style="left:110.16px;top:872.73px;font-size:11.30px;line-height:11.30px;color:#3a3a3a;-webkit-text-stroke:0.25px #3a3a3a;transform:scaleX(1.0236);">Continue</div>
<div style="position:absolute;left:181.00px;top:838.70px;width:24.00px;height:7.30px;background:#6cc66c;"></div>
<div class="t" style="left:184.62px;top:856.93px;font-size:11.30px;line-height:11.30px;color:#3a3a3a;-webkit-text-stroke:0.25px #3a3a3a;transform:scaleX(0.9293);">2xx</div>
<div class="t" style="left:172.36px;top:872.73px;font-size:11.30px;line-height:11.30px;color:#3a3a3a;-webkit-text-stroke:0.25px #3a3a3a;transform:scaleX(0.9645);">Success</div>
<div style="position:absolute;left:238.80px;top:838.70px;width:23.70px;height:7.30px;background:#4f7bc4;"></div>
<div class="t" style="left:242.40px;top:856.93px;font-size:11.30px;line-height:11.30px;color:#3a3a3a;-webkit-text-stroke:0.25px #3a3a3a;transform:scaleX(0.9218);">3xx</div>
<div class="t" style="left:229.49px;top:872.73px;font-size:11.30px;line-height:11.30px;color:#3a3a3a;-webkit-text-stroke:0.25px #3a3a3a;transform:scaleX(0.9862);">Redirect</div>
<div style="position:absolute;left:295.30px;top:838.70px;width:23.70px;height:7.30px;background:#e4a010;"></div>
<div class="t" style="left:299.06px;top:856.93px;font-size:11.30px;line-height:11.30px;color:#3a3a3a;-webkit-text-stroke:0.25px #3a3a3a;transform:scaleX(0.9126);">4xx</div>
<div class="t" style="left:296.31px;top:872.73px;font-size:11.30px;line-height:11.30px;color:#3a3a3a;-webkit-text-stroke:0.25px #3a3a3a;transform:scaleX(1.0677);">Bad</div>
<div class="t" style="left:286.25px;top:888.53px;font-size:11.30px;line-height:11.30px;color:#3a3a3a;-webkit-text-stroke:0.25px #3a3a3a;transform:scaleX(0.9737);">Request</div>
<div style="position:absolute;left:347.20px;top:838.70px;width:24.20px;height:7.30px;background:#d03c2c;"></div>
<div class="t" style="left:351.03px;top:856.93px;font-size:11.30px;line-height:11.30px;color:#3a3a3a;-webkit-text-stroke:0.25px #3a3a3a;transform:scaleX(0.9229);">5xx</div>
<div class="t" style="left:343.41px;top:872.73px;font-size:11.30px;line-height:11.30px;color:#3a3a3a;-webkit-text-stroke:0.25px #3a3a3a;transform:scaleX(0.9453);">Server</div>
<div class="t" style="left:347.07px;top:888.53px;font-size:11.30px;line-height:11.30px;color:#3a3a3a;-webkit-text-stroke:0.25px #3a3a3a;transform:scaleX(0.9460);">Error</div>
<div class="t" style="left:422.54px;top:558.23px;font-size:14.50px;line-height:14.50px;font-weight:700;color:#222;transform:scaleX(0.9919);">DNS Request Count</div>
<svg style="position:absolute;left:677.00px;top:559.50px;" width="12" height="12" viewBox="0 0 12 12"><path d="M1 1L11 11M11 1L1 11" stroke="#5a5a5a" stroke-width="1.6" fill="none"/></svg>
<div class="t" style="left:424.18px;top:595.92px;font-size:12.50px;line-height:12.50px;color:#333;-webkit-text-stroke:0.30px #333;transform:scaleX(1.1205);">400</div>
<div class="t" style="left:423.96px;top:650.72px;font-size:12.50px;line-height:12.50px;color:#333;-webkit-text-stroke:0.30px #333;transform:scaleX(1.1311);">300</div>
<div class="t" style="left:423.78px;top:704.52px;font-size:12.50px;line-height:12.50px;color:#333;-webkit-text-stroke:0.30px #333;transform:scaleX(1.1399);">200</div>
<div class="t" style="left:427.28px;top:759.12px;font-size:12.50px;line-height:12.50px;color:#333;-webkit-text-stroke:0.30px #333;transform:scaleX(0.9683);">100</div>
<svg style="position:absolute;left:455.00px;top:592.00px;" width="232" height="190" viewBox="0 0 232 190"><defs><linearGradient id="gr592" x1="0" y1="0" x2="0" y2="1"><stop offset="0" stop-color="#efd0cf"/><stop offset="1" stop-color="#fdf8f7"/></linearGradient><linearGradient id="gg592" x1="0" y1="0" x2="0" y2="1"><stop offset="0" stop-color="#b6e7cc" stop-opacity="0.9"/><stop offset="1" stop-color="#eefaf3" stop-opacity="0.9"/></linearGradient></defs><path d="M52.0 0V190.0" stroke="#f3f3f3" stroke-width="1" stroke-dasharray="3 2"/><path d="M104.0 0V190.0" stroke="#f3f3f3" stroke-width="1" stroke-dasharray="3 2"/><path d="M156.0 0V190.0" stroke="#f3f3f3" stroke-width="1" stroke-dasharray="3 2"/><path d="M208.0 0V190.0" stroke="#f3f3f3" stroke-width="1" stroke-dasharray="3 2"/><path d="M0.0 1.2 C27.5 1.2 27.5 98.0 55.0 98.0 C91.1 98.0 91.1 5.7 127.3 5.7 C161.4 5.7 161.4 61.9 195.5 61.9 C213.8 61.9 213.8 48.5 232.0 48.5 L232.0 190.0 L0.0 190.0 Z" fill="url(#gr592)"/><path d="M0.0 101.6 C27.0 101.6 27.0 166.3 54.0 166.3 C78.2 166.3 78.2 69.2 102.4 69.2 C139.1 69.2 139.1 155.9 175.8 155.9 C203.9 155.9 203.9 60.0 232.0 60.0 L232.0 190.0 L0.0 190.0 Z" fill="url(#gg592)"/><path d="M0.5 0V189.5H232.0" stroke="#e4e4e4" stroke-width="1" fill="none"/></svg>
<div class="t" style="left:455.04px;top:793.19px;font-size:11.00px;line-height:11.00px;color:#707070;-webkit-text-stroke:0.15px #707070;transform:scaleX(1.0547);">5 min ago</div>
<div class="t" style="left:665.25px;top:793.19px;font-size:11.00px;line-height:11.00px;color:#707070;-webkit-text-stroke:0.15px #707070;transform:scaleX(1.0269);">now</div>
<div style="position:absolute;left:408.00px;top:821.50px;width:294.00px;height:1.00px;background:#e6e6e6;"></div>
<div style="position:absolute;left:422.60px;top:836.80px;width:23.70px;height:7.50px;background:#6cc66c;"></div>
<div class="t" style="left:461.39px;top:834.00px;font-size:13.00px;line-height:13.00px;color:#333;-webkit-text-stroke:0.30px #333;transform:scaleX(1.0261);">Successul</div>
<div class="t" style="left:652.03px;top:834.00px;font-size:13.00px;line-height:13.00px;color:#333;-webkit-text-stroke:0.30px #333;transform:scaleX(0.9559);">3,892</div>
<div style="position:absolute;left:408.00px;top:859.00px;width:294.00px;height:1.00px;background:#e6e6e6;"></div>
<div class="t" style="left:734.04px;top:558.23px;font-size:14.50px;line-height:14.50px;font-weight:700;color:#222;transform:scaleX(0.9921);">Process Restarts</div>
<svg style="position:absolute;left:1299.00px;top:559.50px;" width="12" height="12" viewBox="0 0 12 12"><path d="M1 1L11 11M11 1L1 11" stroke="#5a5a5a" stroke-width="1.6" fill="none"/></svg>
<div style="position:absolute;left:720.00px;top:585.60px;width:604.00px;height:30.60px;background:#f4f4f4;"></div>
<div class="t" style="left:733.29px;top:596.53px;font-size:10.00px;line-height:10.00px;font-weight:700;color:#222;transform:scaleX(1.0660);">Process Name</div>
<svg style="position:absolute;left:812.50px;top:596.00px;" width="14" height="11" viewBox="0 0 14 11"><path d="M2.5 0.5V9.5M0.3 7.3L2.5 9.7L4.7 7.3" stroke="#777" stroke-width="1.3" fill="none"/><path d="M6.5 1H13M6.5 4H11.5M6.5 7H10M6.5 10H8" stroke="#777" stroke-width="1.2" fill="none"/></svg>
<div class="t" style="left:906.78px;top:596.53px;font-size:10.00px;line-height:10.00px;font-weight:700;color:#222;transform:scaleX(1.0699);">Endpoint</div>
<svg style="position:absolute;left:958.20px;top:596.00px;" width="14" height="11" viewBox="0 0 14 11"><path d="M2.5 0.5V9.5M0.3 7.3L2.5 9.7L4.7 7.3" stroke="#777" stroke-width="1.3" fill="none"/><path d="M6.5 1H13M6.5 4H11.5M6.5 7H10M6.5 10H8" stroke="#777" stroke-width="1.2" fill="none"/></svg>
<div class="t" style="left:1233.47px;top:596.53px;font-size:10.00px;line-height:10.00px;font-weight:700;color:#222;transform:scaleX(1.0863);">Restarts</div>
<svg style="position:absolute;left:1282.60px;top:596.00px;" width="14" height="11" viewBox="0 0 14 11"><path d="M2.5 0.5V9.5M0.3 7.3L2.5 9.7L4.7 7.3" stroke="#777" stroke-width="1.3" fill="none"/><path d="M6.5 1H13M6.5 4H11.5M6.5 7H10M6.5 10H8" stroke="#777" stroke-width="1.2" fill="none"/></svg>
<div style="position:absolute;left:900.00px;top:623.70px;width:309.80px;height:20.70px;background:#dcdcdc;"></div>
<div class="t" style="left:733.27px;top:627.80px;font-size:13.00px;line-height:13.00px;color:#4a4d9c;-webkit-text-stroke:0.15px #4a4d9c;transform:scaleX(1.1044);">peira</div>
<div class="t" style="left:906.50px;top:628.13px;font-size:12.60px;line-height:12.60px;color:#2e2e2e;-webkit-text-stroke:0.30px #2e2e2e;transform:scaleX(1.0403);">10.88.1.20:8080/_healthz</div>
<div class="t" style="left:1233.38px;top:628.13px;font-size:12.60px;line-height:12.60px;color:#2e2e2e;-webkit-text-stroke:0.30px #2e2e2e;transform:scaleX(0.8513);">14</div>
<div style="position:absolute;left:720.00px;top:652.50px;width:604.00px;height:1.00px;background:#e8e8e8;"></div>
<div style="position:absolute;left:900.00px;top:660.20px;width:277.80px;height:20.70px;background:#dcdcdc;"></div>
<div class="t" style="left:733.27px;top:664.30px;font-size:13.00px;line-height:13.00px;color:#4a4d9c;-webkit-text-stroke:0.15px #4a4d9c;transform:scaleX(1.1044);">peira</div>
<div class="t" style="left:907.03px;top:664.63px;font-size:12.60px;line-height:12.60px;color:#2e2e2e;-webkit-text-stroke:0.30px #2e2e2e;transform:scaleX(0.9823);">35.188.199.244/</div>
<div class="t" style="left:1233.58px;top:664.63px;font-size:12.60px;line-height:12.60px;color:#2e2e2e;-webkit-text-stroke:0.30px #2e2e2e;transform:scaleX(0.6431);">11</div>
<div style="position:absolute;left:720.00px;top:689.00px;width:604.00px;height:1.00px;background:#e8e8e8;"></div>
<div style="position:absolute;left:900.00px;top:696.70px;width:255.20px;height:20.70px;background:#dcdcdc;"></div>
<div class="t" style="left:734.22px;top:700.80px;font-size:13.00px;line-height:13.00px;color:#4a4d9c;-webkit-text-stroke:0.15px #4a4d9c;transform:scaleX(1.0590);">wget</div>
<div class="t" style="left:907.04px;top:701.13px;font-size:12.60px;line-height:12.60px;color:#2e2e2e;-webkit-text-stroke:0.30px #2e2e2e;transform:scaleX(0.9665);">351.198.20.40/</div>
<div class="t" style="left:1233.61px;top:701.13px;font-size:12.60px;line-height:12.60px;color:#2e2e2e;-webkit-text-stroke:0.30px #2e2e2e;">9</div>
<div style="position:absolute;left:720.00px;top:725.50px;width:604.00px;height:1.00px;background:#e8e8e8;"></div>
<div style="position:absolute;left:900.00px;top:733.20px;width:75.60px;height:20.70px;background:#dcdcdc;"></div>
<div class="t" style="left:733.27px;top:737.30px;font-size:13.00px;line-height:13.00px;color:#4a4d9c;-webkit-text-stroke:0.15px #4a4d9c;transform:scaleX(1.1044);">peira</div>
<div class="t" style="left:906.56px;top:737.63px;font-size:12.60px;line-height:12.60px;color:#2e2e2e;-webkit-text-stroke:0.30px #2e2e2e;transform:scaleX(0.9767);">11.18.801.222/_feodo</div>
<div class="t" style="left:1233.72px;top:737.63px;font-size:12.60px;line-height:12.60px;color:#2e2e2e;-webkit-text-stroke:0.30px #2e2e2e;">3</div>
<div style="position:absolute;left:720.00px;top:762.00px;width:604.00px;height:1.00px;background:#e8e8e8;"></div>
<div style="position:absolute;left:900.00px;top:769.70px;width:75.60px;height:20.70px;background:#dcdcdc;"></div>
<div class="t" style="left:734.22px;top:773.80px;font-size:13.00px;line-height:13.00px;color:#4a4d9c;-webkit-text-stroke:0.15px #4a4d9c;transform:scaleX(1.0590);">wget</div>
<div class="t" style="left:906.91px;top:774.13px;font-size:12.60px;line-height:12.60px;color:#2e2e2e;-webkit-text-stroke:0.30px #2e2e2e;transform:scaleX(1.0691);">89.89.899.998/</div>
<div class="t" style="left:1233.72px;top:774.13px;font-size:12.60px;line-height:12.60px;color:#2e2e2e;-webkit-text-stroke:0.30px #2e2e2e;">3</div>
<div style="position:absolute;left:720.00px;top:798.50px;width:604.00px;height:1.00px;background:#e8e8e8;"></div>
<div style="position:absolute;left:900.00px;top:806.20px;width:24.90px;height:20.70px;background:#dcdcdc;"></div>
<div class="t" style="left:733.29px;top:810.30px;font-size:13.00px;line-height:13.00px;color:#4a4d9c;-webkit-text-stroke:0.15px #4a4d9c;transform:scaleX(1.0876);">productcatalogservice</div>
<div class="t" style="left:906.91px;top:810.63px;font-size:12.60px;line-height:12.60px;color:#2e2e2e;-webkit-text-stroke:0.30px #2e2e2e;transform:scaleX(1.0691);">89.89.899.998/</div>
<div class="t" style="left:1233.24px;top:810.63px;font-size:12.60px;line-height:12.60px;color:#2e2e2e;-webkit-text-stroke:0.30px #2e2e2e;">1</div>
<div style="position:absolute;left:720.00px;top:835.00px;width:604.00px;height:1.00px;background:#e8e8e8;"></div>
<div style="position:absolute;left:900.00px;top:842.70px;width:24.90px;height:20.70px;background:#dcdcdc;"></div>
<div class="t" style="left:733.29px;top:846.80px;font-size:13.00px;line-height:13.00px;color:#4a4d9c;-webkit-text-stroke:0.15px #4a4d9c;transform:scaleX(1.0876);">productcatalogservice</div>
<div class="t" style="left:906.91px;top:847.13px;font-size:12.60px;line-height:12.60px;color:#2e2e2e;-webkit-text-stroke:0.30px #2e2e2e;transform:scaleX(1.0691);">89.89.899.998/</div>
<div class="t" style="left:1233.71px;top:847.13px;font-size:12.60px;line-height:12.60px;color:#2e2e2e;-webkit-text-stroke:0.30px #2e2e2e;">0</div>
<div style="position:absolute;left:720.00px;top:871.50px;width:604.00px;height:1.00px;background:#e8e8e8;"></div>
</body></html>
